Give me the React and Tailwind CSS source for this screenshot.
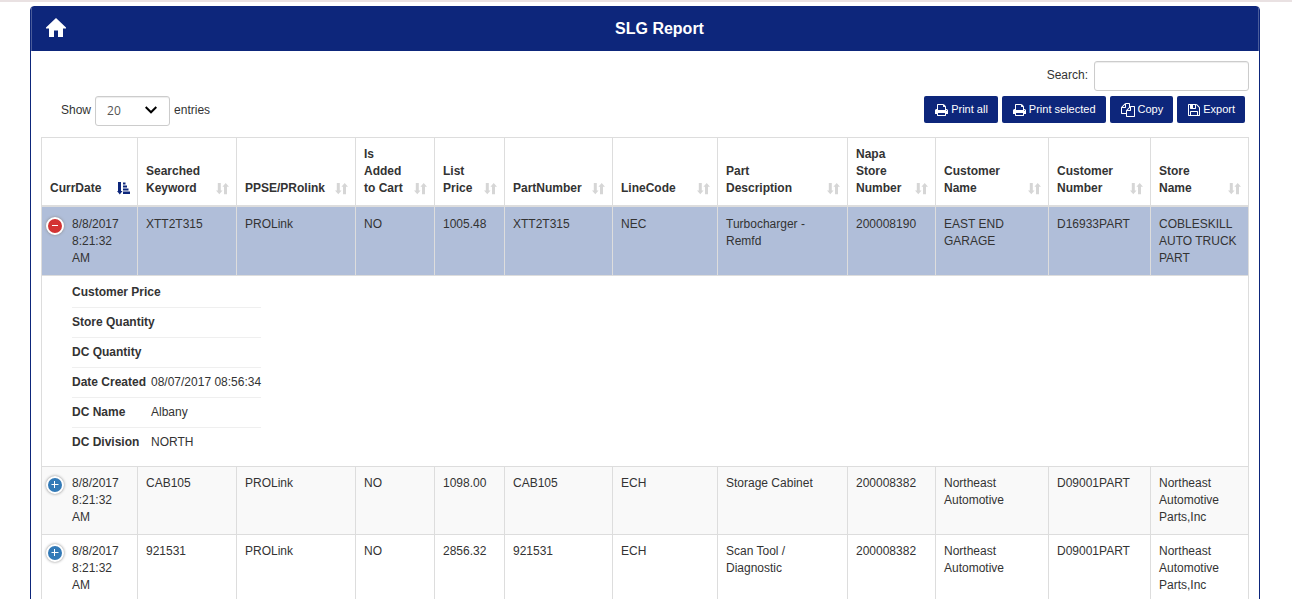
import { useState } from "react";

const columns = [
  { label: "CurrDate", width: "w-[96px]" },
  { label: "Searched\nKeyword", width: "w-[99px]" },
  { label: "PPSE/PRolink", width: "w-[119px]" },
  { label: "Is\nAdded\nto Cart", width: "w-[79px]" },
  { label: "List\nPrice", width: "w-[70px]" },
  { label: "PartNumber", width: "w-[108px]" },
  { label: "LineCode", width: "w-[105px]" },
  { label: "Part\nDescription", width: "w-[130px]" },
  { label: "Napa\nStore\nNumber", width: "w-[88px]" },
  { label: "Customer\nName", width: "w-[113px]" },
  { label: "Customer\nNumber", width: "w-[102px]" },
  { label: "Store\nName", width: "w-[98px]" },
];

const rows = [
  {
    cells: ["8/8/2017 8:21:32 AM", "XTT2T315", "PROLink", "NO", "1005.48", "XTT2T315", "NEC", "Turbocharger - Remfd", "200008190", "EAST END GARAGE", "D16933PART", "COBLESKILL AUTO TRUCK PART"],
    selected: true,
    details: [
      ["Customer Price", ""],
      ["Store Quantity", ""],
      ["DC Quantity", ""],
      ["Date Created", "08/07/2017 08:56:34"],
      ["DC Name", "Albany"],
      ["DC Division", "NORTH"],
    ],
  },
  {
    cells: ["8/8/2017 8:21:32 AM", "CAB105", "PROLink", "NO", "1098.00", "CAB105", "ECH", "Storage Cabinet", "200008382", "Northeast Automotive", "D09001PART", "Northeast Automotive Parts,Inc"],
    striped: true,
  },
  {
    cells: ["8/8/2017 8:21:32 AM", "921531", "PROLink", "NO", "2856.32", "921531", "ECH", "Scan Tool /\nDiagnostic", "200008382", "Northeast Automotive", "D09001PART", "Northeast Automotive Parts,Inc"],
  },
];

const PRINT =
  "M384 1536h896v-256h-896v256zM384 896h896v-384h-160q-40 0-68-28t-28-68v-160h-640v640zM1536 960q0-26-19-45t-45-19-45 19-19 45 19 45 45 19 45-19 19-45zM1664 960v416q0 13-9.5 22.5t-22.5 9.5h-224v160q0 40-28 68t-68 28h-960q-40 0-68-28t-28-68v-160h-224q-13 0-22.5-9.5t-9.5-22.5v-416q0-79 56.5-135.5t135.5-56.5h64v-544q0-40 28-68t68-28h672q40 0 88 20t76 48l152 152q28 28 48 76t20 88v256h64q79 0 135.5 56.5t56.5 135.5z";
const COPY =
  "M1696 384q40 0 68 28t28 68v1216q0 40-28 68t-68 28h-960q-40 0-68-28t-28-68v-288h-544q-40 0-68-28t-28-68v-672q0-40 20-88t48-76l408-408q28-28 76-48t88-20h416q40 0 68 28t28 68v328q68-40 128-40h416zm-544 213l-299 299h299v-299zm-640-384l-299 299h299v-299zm196 647l316-316v-416h-384v416q0 40-28 68t-68 28h-416v640h512v-256q0-40 20-88t48-76zm956 804v-1152h-384v416q0 40-28 68t-68 28h-416v640h896z";
const SAVE =
  "M512 1536h768v-384h-768v384zm896 0h128v-896q0-14-10-38.5t-20-34.5l-281-281q-10-10-34-20t-39-10v416q0 40-28 68t-68 28h-576q-40 0-68-28t-28-68v-416h-128v1280h128v-416q0-40 28-68t68-28h832q40 0 68 28t28 68v416zm-384-928v-320q0-13-9.5-22.5t-22.5-9.5h-192q-13 0-22.5 9.5t-9.5 22.5v320q0 13 9.5 22.5t22.5 9.5h192q13 0 22.5-9.5t9.5-22.5zm640 32v928q0 40-28 68t-68 28h-1344q-40 0-68-28t-28-68v-1344q0-40 28-68t68-28h928q40 0 88 20t76 48l280 280q28 28 48 76t20 88z";

const actions = [
  { label: "Print all", path: PRINT, box: "0 0 1664 1792" },
  { label: "Print selected", path: PRINT, box: "0 0 1664 1792" },
  { label: "Copy", path: COPY, box: "0 0 1792 1792" },
  { label: "Export", path: SAVE, box: "128 0 1536 1792" },
];

function SortIcon({ active }) {
  return active ? (
    <svg viewBox="0 0 13 13" className="mb-0.5 h-[13px] w-[13px] shrink-0 fill-[#0d267b]" aria-hidden="true">
      <path d="M1 0h3v9h1.500L2.800 12.500 0 9h1z" />
      <path d="M6 0.500h2.500v2H6zM6 3.500h4v2H6zM6 6.500h5.500v2H6zM6 9.500h7v2.500H6z" />
    </svg>
  ) : (
    <svg viewBox="0 0 13 13" className="mb-0.5 h-[13px] w-[13px] shrink-0 fill-[#d6d6d6]" aria-hidden="true">
      <path d="M1.800 1h3v7.500H6.500L3.300 12.200 0 8.500h1.800z" />
      <path d="M8 12.200h3V4.700h2L9.700 1 6.400 4.700H8z" />
    </svg>
  );
}

function Toggle({ open, onClick }) {
  return (
    <button
      type="button"
      onClick={onClick}
      aria-label={open ? "Hide details" : "Show details"}
      className={`mt-px flex h-[18px] w-[18px] shrink-0 items-center justify-center rounded-full border-2 border-white shadow-[0_0_3px_#888] ${open ? "bg-[#d33333]" : "bg-[#337ab7]"}`}
    >
      <svg viewBox="0 0 14 14" className="h-3.5 w-3.5 shrink-0 fill-none stroke-white" aria-hidden="true">
        <path d={open ? "M4 6.500h6" : "M3.500 6.500h7M6.500 3v7"} />
      </svg>
    </button>
  );
}

function Row({ row }) {
  const [open, setOpen] = useState(Boolean(row.details));
  const [first, ...rest] = row.cells;
  const tone = row.selected ? "bg-[#b0bed9] pt-[9px]" : row.striped ? "bg-[#f9f9f9] pt-2" : "bg-white pt-2";
  const cell = `border-b border-l border-[#dddddd] px-2 pb-2 align-top whitespace-pre-line ${tone}`;
  return (
    <>
      <tr>
        <td className={cell}>
          <div className="-ml-1 flex gap-2">
            <Toggle open={open} onClick={() => setOpen(!open)} />
            <span>{first}</span>
          </div>
        </td>
        {rest.map((text, i) => (
          <td key={i} className={cell}>
            {text}
          </td>
        ))}
      </tr>
      {open && row.details && (
        <tr>
          <td colSpan={12} className="border-b border-l border-[#dddddd] bg-white pt-2 pb-[15px] pl-[30px]">
            <ul className="w-fit">
              {row.details.map(([name, value]) => (
                <li
                  key={name}
                  className="flex gap-1 border-b border-[#efefef] py-1.5 whitespace-nowrap first:pt-0 last:border-b-0 last:pb-0"
                >
                  <span className="w-[75px] font-bold">{name}</span>
                  <span>{value}</span>
                </li>
              ))}
            </ul>
          </td>
        </tr>
      )}
    </>
  );
}

export default function App() {
  return (
    <div className="h-screen overflow-hidden bg-white font-['Liberation_Sans',Arial,sans-serif] text-xs leading-[17px] text-[#333333]">
      <div className="h-0.5 bg-[#e9e1e2]" />
      <main className="mt-1 mr-8 ml-[30px] min-h-full rounded-t border border-[#0d267b]">
        <header className="flex h-11 items-center border-x border-[#4a5c9a] bg-[#0d267b] pr-[5px] pl-3.5 text-white">
          <a href="#home" aria-label="Home" className="pb-1">
            <svg viewBox="0 0 20 19" className="block h-[19px] w-5 fill-white" aria-hidden="true">
              <path d="M10 0 20 9.500V10.500H17V19H12V12.500H8V19H3V10.500H0V9.500z" />
            </svg>
          </a>
          <h1 className="flex-1 text-center text-base font-bold">SLG Report</h1>
        </header>

        <div className="px-2.5 pt-2.5">
          <div className="flex items-center justify-end gap-1.5">
            <label htmlFor="search" className="pb-0.5">
              Search:
            </label>
            <input
              id="search"
              type="search"
              className="h-[30px] w-[155px] rounded-[3px] border border-[#cccccc] bg-white px-2.5 shadow-[inset_0_1px_1px_rgba(0,0,0,0.075)]"
            />
          </div>
          <div className="mt-[5px] flex items-start justify-between pr-1 pl-5">
            <div className="flex items-center gap-1">
              <label htmlFor="length" className="pb-0.5">
                Show
              </label>
              <div className="relative">
                <select
                  id="length"
                  defaultValue="20"
                  className="block h-[30px] w-[75px] appearance-none rounded-[3px] border border-[#cccccc] bg-white pb-0.5 pl-[11px] font-['Open_Sans','Noto_Sans',sans-serif] text-[#555555] shadow-[inset_0_1px_1px_rgba(0,0,0,0.075)]"
                >
                  <option>10</option>
                  <option>20</option>
                  <option>50</option>
                </select>
                <svg viewBox="0 0 12 8" className="pointer-events-none absolute top-2.5 right-[13px] h-2 w-3 fill-none stroke-black stroke-2" aria-hidden="true">
                  <path d="M0.700 1l5.300 5.300L11.300 1" />
                </svg>
              </div>
              <span className="pb-0.5">entries</span>
            </div>
            <div className="flex gap-1">
              {actions.map((a) => (
                <button
                  key={a.label}
                  type="button"
                  className="flex h-[27px] items-center gap-[3px] rounded-xs bg-[#0d267b] pr-2.5 pl-[11px] text-[11px] text-white"
                >
                  <svg viewBox={a.box} className="h-3.5 w-auto shrink-0 fill-white" aria-hidden="true">
                    <path d={a.path} />
                  </svg>
                  {a.label}
                </button>
              ))}
            </div>
          </div>

          <table className="mt-[11px] w-full table-fixed border-separate border-spacing-0 border-r border-[#dddddd]">
            <thead>
              <tr>
                {columns.map((c, i) => (
                  <th
                    key={c.label}
                    scope="col"
                    aria-sort={i === 0 ? "ascending" : "none"}
                    className={`${c.width} border-t border-b-2 border-l border-[#dddddd] py-2 pr-[7px] pl-2 text-left align-bottom font-bold`}
                  >
                    <button type="button" className="flex w-full items-end justify-between text-left whitespace-pre-line">
                      {c.label}
                      <SortIcon active={i === 0} />
                    </button>
                  </th>
                ))}
              </tr>
            </thead>
            <tbody>
              {rows.map((row, i) => (
                <Row key={i} row={row} />
              ))}
            </tbody>
          </table>
        </div>
      </main>
    </div>
  );
}
